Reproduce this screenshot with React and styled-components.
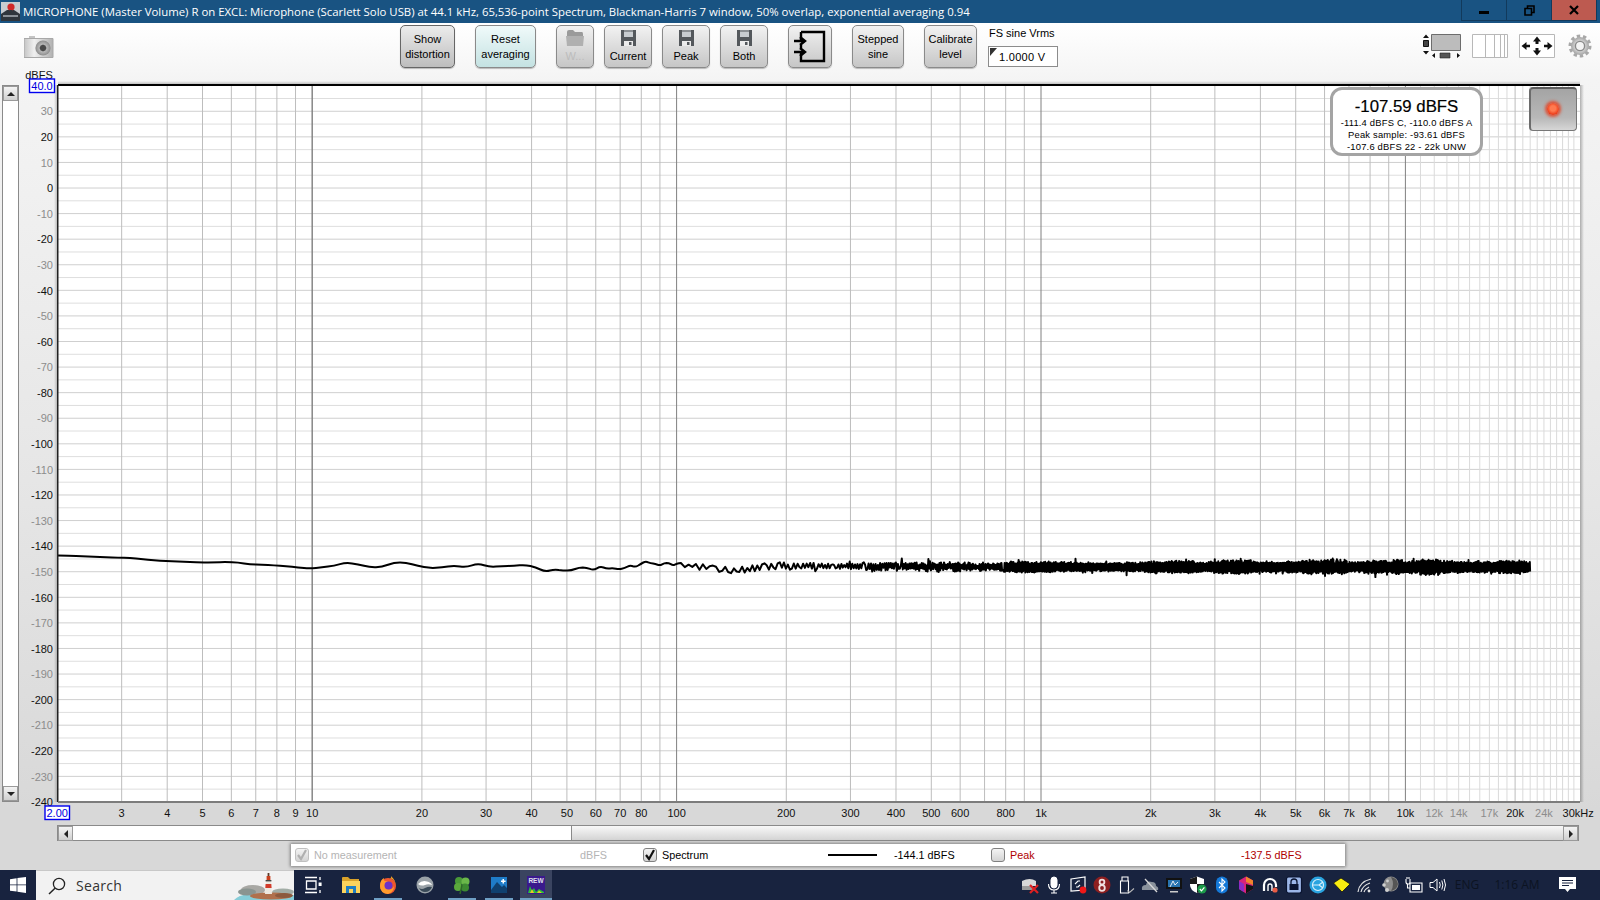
import styled, { createGlobalStyle } from "styled-components";

const GlobalStyle = createGlobalStyle`
  html, body {
    margin: 0;
    padding: 0;
    width: 1600px;
    height: 900px;
    overflow: hidden;
    font-family: "Liberation Sans", Arial, sans-serif;
  }
  #root { height: 100%; }
`;

// chart geometry, page pixels
const PLOT = { left: 58, right: 1580, top: 85, bottom: 802 };
const DECADE = 364.4;
const freqX = (f) => 312.2 + (Math.log10(f) - 1) * DECADE;
const dbY = (db) => 85.7 + (40 - db) * 2.558;

const buildGridFreqs = () => {
  const light = [];
  const mid = [];
  const dark = [];
  [1, 10, 100, 1000].forEach((d) => {
    for (let i = 1; i < 10; i++) {
      const f = d * i;
      if (f < 2) continue;
      if (i === 1 && d > 1) dark.push(f);
      else if (i === 1) continue;
      else mid.push(f);
    }
  });
  dark.push(10, 10000);
  for (let f = 11000; f < 30000; f += 1000) {
    if (f === 20000) mid.push(f);
    else light.push(f);
  }
  return { light, mid, dark };
};

const xLabels = [
  [3, "3"], [4, "4"], [5, "5"], [6, "6"], [7, "7"], [8, "8"], [9, "9"], [10, "10"],
  [20, "20"], [30, "30"], [40, "40"], [50, "50"], [60, "60"], [70, "70"], [80, "80"], [100, "100"],
  [200, "200"], [300, "300"], [400, "400"], [500, "500"], [600, "600"], [800, "800"], [1000, "1k"],
  [2000, "2k"], [3000, "3k"], [4000, "4k"], [5000, "5k"], [6000, "6k"], [7000, "7k"], [8000, "8k"],
  [10000, "10k"], [12000, "12k", true], [14000, "14k", true], [17000, "17k", true], [20000, "20k"],
  [24000, "24k", true], [29800, "30kHz"],
];

const rng = (seed) => () => {
  seed = (seed + 0x6d2b79f5) | 0;
  let t = Math.imul(seed ^ (seed >>> 15), 1 | seed);
  t = (t + Math.imul(t ^ (t >>> 7), 61 | t)) ^ t;
  return ((t ^ (t >>> 14)) >>> 0) / 4294967296;
};

// mean of the trace, read off the picture
const traceKeys = [
  [58, 555.5], [121, 557.5], [166, 561], [202, 562.5], [231, 562], [255, 564.5], [276, 565.5],
  [312, 568.5], [327, 567], [347, 562.5], [376, 568], [400, 561.5], [420, 566], [439, 569.5],
  [454, 564.5], [470, 566.5], [480, 564.5], [495, 567.5], [515, 564.5], [531, 567.5], [546, 570.5],
  [560, 567.5], [580, 568], [620, 567], [650, 565], [690, 566], [730, 570], [780, 566],
  [1000, 567], [1530, 567],
];

const meanAt = (x) => {
  for (let i = 1; i < traceKeys.length; i++) {
    const [x0, y0] = traceKeys[i - 1];
    const [x1, y1] = traceKeys[i];
    if (x <= x1) {
      const t = (x - x0) / (x1 - x0);
      const s = t * t * (3 - 2 * t);
      return y0 + (y1 - y0) * s;
    }
  }
  return 567;
};

const ampAt = (x) => {
  if (x < 430) return 0;
  if (x < 680) return 2 + ((x - 430) / 250) * 2.4;
  if (x < 1000) return 3 + ((x - 680) / 320) * 1.8;
  return 4.8 + ((x - 1000) / 530) * 2.6;
};

const buildTrace = () => {
  const rand = rng(4217);
  const pts = [];
  let x = PLOT.left;
  let side = 1;
  let env = 1;
  while (x < 1530.5) {
    const f = 10 * Math.pow(10, (x - 312) / DECADE);
    let n;
    if (x < 680) {
      n = (rand() - 0.5) * 2 * ampAt(x);
    } else {
      // swing from edge to edge with an uneven rim, so the band reads as noise
      env += (rand() - 0.5) * 0.12;
      env = Math.min(1.15, Math.max(0.72, env));
      if (rand() < 0.85) side = -side;
      n = side * ampAt(x) * env * (x < 1000 ? 0.25 + 0.75 * rand() : 0.55 + 0.45 * rand());
      if (rand() < 0.02) n += 4 * Math.sign(n) * (0.4 + rand() * 0.6);
    }
    pts.push([x, meanAt(x) + n]);
    x += Math.max(0.35, Math.min(12, 400 / f));
  }
  let d = `M${pts[0][0].toFixed(1)} ${pts[0][1].toFixed(1)}`;
  for (let i = 1; i < pts.length - 1; i++) {
    if (pts[i][0] > 680) {
      d += `L${pts[i][0].toFixed(1)} ${pts[i][1].toFixed(1)}`;
    } else {
      const mx = (pts[i][0] + pts[i + 1][0]) / 2;
      const my = (pts[i][1] + pts[i + 1][1]) / 2;
      d += `Q${pts[i][0].toFixed(1)} ${pts[i][1].toFixed(1)} ${mx.toFixed(1)} ${my.toFixed(1)}`;
    }
  }
  return d;
};

const Floppy = () => (
  <svg width="15" height="16" viewBox="0 0 15 16">
    <path d="M0 0H15V16H0Z" fill="#54585c" />
    <path d="M3 0H12V7H3Z" fill="#c8ccd0" />
    <path d="M3 0H12V2H3Z" fill="#8c9094" />
    <path d="M3 11H12V16H3Z" fill="#ececec" />
    <path d="M8 12H10.5V15H8Z" fill="#54585c" />
  </svg>
);

const FolderIcon = () => (
  <svg width="18" height="16" viewBox="0 0 18 16">
    <path d="M1 2Q1 0 3 0H7L9 2H16Q17 2 17 4V6H1Z" fill="#9a9a9a" />
    <path d="M0 6H18L17 16H1Z" fill="#b0b0b0" />
  </svg>
);

const InputIcon = () => (
  <svg width="33" height="33" viewBox="0 0 33 33">
    <path d="M7 2H30V31H7V23" fill="none" stroke="#000" strokeWidth="2.4" />
    <path d="M7 2V10M7 15V18" fill="none" stroke="#000" strokeWidth="2.4" />
    <path d="M0 11H10M6 7L11 11L6 15M0 22H10M6 18L11 22L6 26" fill="none" stroke="#000" strokeWidth="2.4" />
  </svg>
);

const CameraIcon = () => (
  <svg width="30" height="22" viewBox="0 0 30 22">
    <defs>
      <linearGradient id="camBody" x1="0" x2="1" y1="0" y2="0">
        <stop offset="0" stopColor="#c4c4c4" />
        <stop offset="0.35" stopColor="#f0f0f0" />
        <stop offset="1" stopColor="#b0b0b0" />
      </linearGradient>
      <radialGradient id="camLens">
        <stop offset="0.35" stopColor="#4a4a4a" />
        <stop offset="0.5" stopColor="#b8b8b8" />
        <stop offset="1" stopColor="#8c8c8c" />
      </radialGradient>
    </defs>
    <path d="M5 0H11V3H5Z" fill="#c4c4c4" />
    <path d="M0 2.5H29V21.5H0Z" fill="url(#camBody)" stroke="#a8a8a8" />
    <circle cx="19" cy="12" r="7.6" fill="url(#camLens)" />
  </svg>
);

const ResizeIcon = () => (
  <svg width="38" height="25" viewBox="0 0 38 25">
    <path d="M8.5 0.5H37.5V16.5H8.5Z" fill="#bcbcbc" stroke="#6d6d6d" />
    <path d="M0 4L3 0.5L6 4ZM0 17L3 20.5L6 17Z" fill="#111" />
    <path d="M0.5 6.5H5.5V12.5H0.5Z" fill="#444" stroke="#111" />
    <path d="M12 19L9 21.5L12 24ZM34 19L37 21.5L34 24Z" fill="#111" />
    <path d="M17 19H27V24H17Z" fill="#555" stroke="#222" strokeWidth="0.6" />
  </svg>
);

const ColumnsIcon = () => (
  <svg width="36" height="24" viewBox="0 0 36 24">
    <path d="M0.5 0.5H35.5V23.5H0.5ZM13.5 0.5V23.5M22.5 0.5V23.5M28.5 0.5V23.5M32.5 0.5V23.5" fill="#fff" stroke="#b8b8b8" />
  </svg>
);

const ArrowsIcon = () => (
  <svg width="36" height="24" viewBox="0 0 36 24">
    <path d="M0.5 0.5H35.5V23.5H0.5Z" fill="#fff" stroke="#b8b8b8" />
    <path d="M18 2.5L22 7.5H19.5V10H16.5V7.5H14ZM18 21.5L22 16.5H19.5V14H16.5V16.5H14ZM2.5 12L7.5 8V10.8H11V13.2H7.5V16ZM33.5 12L28.5 8V10.8H25V13.2H28.5V16Z" fill="#111" />
  </svg>
);

const GearIcon = () => (
  <svg width="24" height="24" viewBox="0 0 24 24">
    <defs>
      <radialGradient id="gearFill">
        <stop offset="0.4" stopColor="#e4e4e4" />
        <stop offset="1" stopColor="#a4a4a4" />
      </radialGradient>
    </defs>
    <circle cx="12" cy="12" r="10" fill="none" stroke="#a8a8a8" strokeWidth="3" strokeDasharray="3.4 2.83" />
    <circle cx="12" cy="12" r="9" fill="url(#gearFill)" />
    <circle cx="12" cy="12" r="4.6" fill="#f4f4f4" stroke="#8a8a8a" strokeWidth="1.4" />
  </svg>
);

const AppIcon = () => (
  <svg width="19" height="20" viewBox="0 0 19 20">
    <path d="M0 1H19V20H0Z" fill="#c8ccd0" />
    <path d="M0 13L6 9L13 9L19 13V20H0Z" fill="#30363c" />
    <path d="M2 14H17V16H2Z" fill="#8a9096" />
    <circle cx="10" cy="6" r="3.6" fill="#d02828" />
    <path d="M9 9H11V14H9Z" fill="#30363c" />
  </svg>
);

const WindowsLogo = () => (
  <svg width="16" height="16" viewBox="0 0 16 16">
    <path d="M0 2.2L6.6 1.2V7.4H0ZM7.4 1.1L16 0V7.4H7.4ZM0 8.2H6.6V14.6L0 13.7ZM7.4 8.2H16V16L7.4 14.8Z" fill="#fff" />
  </svg>
);

const SearchGlyph = () => (
  <svg width="18" height="18" viewBox="0 0 18 18">
    <circle cx="11" cy="7" r="5.6" fill="none" stroke="#222" strokeWidth="1.3" />
    <path d="M7 11.2L1 17" stroke="#222" strokeWidth="1.5" />
  </svg>
);

const Lighthouse = () => (
  <svg width="60" height="27" viewBox="0 0 60 27">
    <path d="M0 27Q6 21 16 22H60V27Z" fill="#86cdd8" />
    <ellipse cx="19" cy="17" rx="12" ry="5" fill="#a8a8a4" />
    <ellipse cx="13" cy="19" rx="9" ry="3.4" fill="#8a9490" />
    <ellipse cx="49" cy="19" rx="11" ry="3.4" fill="#a2ada6" />
    <ellipse cx="37" cy="23" rx="21" ry="3.6" fill="#b0704c" />
    <ellipse cx="50" cy="22.5" rx="9" ry="2.6" fill="#8c5a3e" />
    <path d="M32 8H37L38 21H31Z" fill="#ece8e0" />
    <path d="M31.6 11H37.3L37.6 15H31.3Z" fill="#d23a2a" />
    <path d="M32.6 3H36.4V7.4H32.6Z" fill="#c8401e" />
    <path d="M33.6 0H35.4V3H33.6Z" fill="#5a3a2a" />
    <path d="M31.6 7H37.4V8.4H31.6Z" fill="#444" />
  </svg>
);

const TaskViewIcon = () => (
  <svg width="18" height="18" viewBox="0 0 18 18" fill="none" stroke="#fff" strokeWidth="1.3">
    <path d="M0 1.5H12M0 16.5H12M1.5 5H11V13H1.5Z" />
    <path d="M15 1V4M15 14V17" />
    <path d="M13.6 6.5H16.6V10H13.6Z" fill="#fff" stroke="none" />
  </svg>
);

const ExplorerIcon = () => (
  <svg width="18" height="16" viewBox="0 0 18 16">
    <path d="M0 1Q0 0 1 0H6L8 2H17V6H0Z" fill="#d9a22a" />
    <path d="M0 4H18V16H0Z" fill="#fcd35c" />
    <path d="M4 9H14V16H11V12H7V16H4Z" fill="#1f7ec2" />
  </svg>
);

const FirefoxIcon = () => (
  <svg width="18" height="18" viewBox="0 0 18 18">
    <circle cx="9" cy="10" r="8" fill="#f0562f" />
    <path d="M9 2Q16 2 17 10Q17 5 12 0Q13 3 9 2Z" fill="#ffa824" />
    <path d="M1 10Q1 4 5 2Q4 6 9 5Q4 9 9 13Q13 14 15 10Q15 16 9 18Q1 17 1 10Z" fill="#ff9c2c" />
    <circle cx="9.5" cy="9.5" r="4" fill="#6b33c8" />
  </svg>
);

const DiscIcon = () => (
  <svg width="18" height="18" viewBox="0 0 18 18">
    <circle cx="9" cy="9" r="8.5" fill="#9aa2a8" />
    <path d="M2 8Q6 4 11 5.5Q15 6.5 16 9Q12 7.6 9 9Q5 10.5 2 8Z" fill="#fff" />
    <path d="M3 12Q6 14 9 12Q13 10 16 11Q14 16 9 16Q5 16 3 12Z" fill="#3a4a58" />
  </svg>
);

const CloverIcon = () => (
  <svg width="18" height="18" viewBox="0 0 18 18">
    <circle cx="6" cy="5" r="4" fill="#4a9a38" />
    <circle cx="12.5" cy="5.5" r="4" fill="#6ab84a" />
    <circle cx="5" cy="11" r="4" fill="#5aa83c" />
    <circle cx="12" cy="11.5" r="4" fill="#3d8a32" />
    <path d="M9 9L7 18" stroke="#2e6a28" strokeWidth="1.4" />
  </svg>
);

const PhotoIcon = () => (
  <svg width="16" height="16" viewBox="0 0 16 16">
    <path d="M0 0H16V16H0Z" fill="#1f7cc8" />
    <path d="M0 13L6 5L11 10L13 8L16 11V16H0Z" fill="#10406e" />
    <path d="M11.5 2H13V3.6H14.6V5H13V6.6H11.5V5H10V3.6H11.5Z" fill="#fff" />
  </svg>
);

const RewIcon = () => (
  <svg width="18" height="18" viewBox="0 0 18 18">
    <path d="M0 0H18V18H0Z" fill="#3a1a8c" />
    <RewLetters x="9" y="6.6" textAnchor="middle">REW</RewLetters>
    <path d="M1 17L3 10L5 15L7 12L9 16L12 13L17 16V17Z" fill="#28c03a" />
    <path d="M3 17L5 13L7 17ZM10 17L12 14.5L15 17Z" fill="#e8c828" />
  </svg>
);

const TRAY = [
  <g key="net">
    <path d="M1 5Q9 1 15 5V10H1Z" fill="#d8d8d8" />
    <path d="M1 10H12V14H1Z" fill="#9c9c9c" />
    <path d="M9 9L17 17M17 9L9 17" stroke="#e02020" strokeWidth="2.2" />
  </g>,
  <g key="mic" fill="none" stroke="#fff">
    <rect x="6" y="1" width="6" height="11" rx="3" fill="#fff" />
    <path d="M3.5 8Q3.5 14 9 14Q14.5 14 14.5 8M9 14V17M6 17H12" strokeWidth="1.1" />
  </g>,
  <g key="rec">
    <path d="M2 3L16 1V14L2 15Z" fill="none" stroke="#fff" strokeWidth="1.2" />
    <path d="M6 8L9 5H11M11 9L9 11H7" fill="none" stroke="#fff" strokeWidth="1.1" />
    <circle cx="14" cy="14" r="3.4" fill="#f01818" />
  </g>,
  <g key="eight">
    <circle cx="9" cy="9" r="8.5" fill="#8c1f20" />
    <circle cx="9" cy="6" r="2.4" fill="none" stroke="#f0e0e0" strokeWidth="1.8" />
    <circle cx="9" cy="12" r="2.8" fill="none" stroke="#f0e0e0" strokeWidth="1.8" />
  </g>,
  <g key="usb" fill="none" stroke="#fff" strokeWidth="1.1">
    <path d="M5 1H11V5H5ZM3.5 5H11.5V17H3.5Z" />
    <path d="M10.5 14.5L12.5 16.5L17 12.5" stroke="#b8b8b8" />
  </g>,
  <g key="cloud">
    <path d="M1 14Q0 9 5 9Q6 4 11 6Q15 6 15 10Q18 11 17 14Z" fill="#8a929c" />
    <path d="M4 3L16 16" stroke="#d8d8d8" strokeWidth="1.3" />
  </g>,
  <g key="monitor">
    <path d="M1 2H17V13H1Z" fill="#111" />
    <path d="M3 4H15V11H3Z" fill="#2874b0" />
    <path d="M5 11L8 5L10 9L13 6" fill="none" stroke="#e0e8f0" />
    <path d="M5 15H13V16.5H5Z" fill="#cccccc" />
  </g>,
  <g key="shield">
    <path d="M8 0.5L15 3V9Q15 14 8 17Q1 14 1 9V3Z" fill="#fff" />
    <path d="M8 0.5V8H1V3ZM8 8H15V9Q15 14 8 17Z" fill="#1a1a1a" />
    <circle cx="13" cy="13" r="4.6" fill="#1b9a4a" />
    <path d="M10.8 13L12.5 14.8L15.4 11.4" fill="none" stroke="#fff" strokeWidth="1.2" />
  </g>,
  <g key="bt">
    <rect x="3" y="0.5" width="12" height="17" rx="6" fill="#1478d8" />
    <path d="M6 6L12 12L9 15V3L12 6L6 12" fill="none" stroke="#fff" strokeWidth="1.1" />
  </g>,
  <g key="hex">
    <path d="M9 0.5L16 4.5V13L9 17.5L2 13V4.5Z" fill="#d8247a" />
    <path d="M9 0.5L16 4.5V9L9 6Z" fill="#f0842c" />
    <path d="M9 8L16 10V13L9 17.5Z" fill="#141414" />
    <path d="M2 5L7 8V16L2 13Z" fill="#8c2cc8" />
  </g>,
  <g key="arc">
    <path d="M3 15V9A6 6 0 0 1 15 9V11" fill="none" stroke="#fff" strokeWidth="2.2" />
    <path d="M7 15V10A2 2 0 0 1 11 10V15" fill="none" stroke="#fff" strokeWidth="1.4" />
    <circle cx="14" cy="14" r="2.6" fill="#e85c44" />
  </g>,
  <g key="lock">
    <rect x="1.5" y="1" width="15" height="16" rx="2" fill="#9cb6e8" stroke="#0a1430" strokeWidth="1.2" />
    <path d="M6 8V6A3 3 0 0 1 12 6V8" fill="none" stroke="#0a1430" strokeWidth="1.3" />
    <rect x="4.5" y="8" width="9" height="6" fill="#0a1430" />
  </g>,
  <g key="globe">
    <circle cx="9" cy="9" r="8.5" fill="#2aa4e0" />
    <circle cx="9" cy="9" r="5.5" fill="none" stroke="#d8f0fc" strokeWidth="1.2" />
    <path d="M3 9H10L14 6M10 9L14 12" fill="none" stroke="#d8f0fc" strokeWidth="1.2" />
  </g>,
  <g key="diamond">
    <path d="M0.5 7L8 2L17 8L9 16Z" fill="#f8ec10" stroke="#111" strokeWidth="0.8" />
  </g>,
  <g key="wifi" fill="none" stroke="#e4e4e4" strokeWidth="1.2">
    <path d="M1 16Q2 6 14 3M4 16Q5 10 13 7M7 16Q8 13 12 11" />
    <circle cx="12" cy="15" r="1.4" fill="#e4e4e4" stroke="none" />
  </g>,
  <g key="ball">
    <circle cx="10" cy="8" r="7.5" fill="#8c8c8c" />
    <path d="M10 1A7.5 7.5 0 0 1 17 8A9 9 0 0 1 10 15Q14 8 10 1Z" fill="#555" />
    <circle cx="3" cy="9" r="1.8" fill="#d0d0d0" />
    <circle cx="6" cy="14" r="2" fill="#d0d0d0" />
    <circle cx="6.5" cy="5" r="1.4" fill="#d0d0d0" />
  </g>,
  <g key="power" fill="none" stroke="#fff" strokeWidth="1.1">
    <path d="M5 7H17V16H5Z" />
    <path d="M7 9H15V14H7Z" fill="#fff" stroke="none" />
    <path d="M1 3V6Q1 8 3 8H4Q5 8 5 6V3M2 1V3M4 1V3M2.5 8V12H5" />
  </g>,
  <g key="speaker" fill="none" stroke="#fff" strokeWidth="1">
    <path d="M1 6.5H4L8 3V15L4 11.5H1Z" />
    <path d="M10.5 6Q12 9 10.5 12M12.8 4.5Q15 9 12.8 13.5M15 3Q18 9 15 15" />
  </g>,
];

const TaskApps = [
  { id: "task", icon: <TaskViewIcon /> },
  { id: "explorer", icon: <ExplorerIcon /> },
  { id: "firefox", icon: <FirefoxIcon />, open: true },
  { id: "disc", icon: <DiscIcon /> },
  { id: "clover", icon: <CloverIcon />, open: true },
  { id: "photo", icon: <PhotoIcon />, open: true },
  { id: "rew", icon: <RewIcon />, open: true, active: true },
];

const TRACE = buildTrace();
const GRID = buildGridFreqs();

const Chart = () => {
  const ticks = [];
  for (let db = 30; db >= -240; db -= 10) ticks.push(db);
  const minor = [];
  for (let db = 35; db > -240; db -= 10) minor.push(db);

  return (
    <ChartSvg viewBox="22 70 1578 755">
      <defs>
        <linearGradient id="shadeV" x1="0" x2="0" y1="0" y2="1">
          <stop offset="0" stopColor="#000" stopOpacity="0" />
          <stop offset="1" stopColor="#000" stopOpacity="0.28" />
        </linearGradient>
        <linearGradient id="shadeL" x1="0" x2="1" y1="0" y2="0">
          <stop offset="0" stopColor="#000" stopOpacity="0" />
          <stop offset="1" stopColor="#000" stopOpacity="0.28" />
        </linearGradient>
        <linearGradient id="shadeR" x1="1" x2="0" y1="0" y2="0">
          <stop offset="0" stopColor="#000" stopOpacity="0" />
          <stop offset="1" stopColor="#000" stopOpacity="0.28" />
        </linearGradient>
      </defs>

      <rect x={PLOT.left - 4} y={PLOT.top} width="4" height={PLOT.bottom - PLOT.top} fill="url(#shadeL)" />
      <rect x={PLOT.right} y={PLOT.top} width="4" height={PLOT.bottom - PLOT.top} fill="url(#shadeR)" />
      <rect x={PLOT.left} y={PLOT.top - 4} width={PLOT.right - PLOT.left} height="4" fill="url(#shadeV)" />
      <rect x={PLOT.left} y={PLOT.top} width={PLOT.right - PLOT.left} height={PLOT.bottom - PLOT.top} fill="#fff" />

      {minor.map((db) => (
        <HLine key={db} x1={PLOT.left} x2={PLOT.right} y1={dbY(db)} y2={dbY(db)} $shade="#dedede" />
      ))}
      {ticks.map((db) => (
        <HLine key={db} x1={PLOT.left} x2={PLOT.right} y1={dbY(db)} y2={dbY(db)} $shade="#cfcfcf" />
      ))}
      {GRID.light.map((f) => (
        <VLine key={f} x1={freqX(f)} x2={freqX(f)} y1={PLOT.top} y2={PLOT.bottom} $shade="#dadada" />
      ))}
      {GRID.mid.map((f) => (
        <VLine key={f} x1={freqX(f)} x2={freqX(f)} y1={PLOT.top} y2={PLOT.bottom} $shade="#bdbdbd" />
      ))}
      {GRID.dark.map((f) => (
        <VLine key={f} x1={freqX(f)} x2={freqX(f)} y1={PLOT.top} y2={PLOT.bottom} $shade="#808080" />
      ))}

      <TraceLine d={TRACE} />

      <rect x={PLOT.left} y={PLOT.top - 1} width={PLOT.right - PLOT.left} height="2" fill="#000" />
      <rect x={PLOT.left - 1} y={PLOT.top} width="1.5" height={PLOT.bottom - PLOT.top} fill="#222" />
      <rect x={PLOT.left} y={PLOT.bottom - 1} width={PLOT.right - PLOT.left} height="2" fill="#7c7c7c" />

      <AxisLabel x="39" y="79" textAnchor="middle">dBFS</AxisLabel>
      {ticks.map((db) => (
        <AxisLabel key={db} x="53" y={dbY(db) + 4.2} textAnchor="end" $muted={db % 20 !== 0}>
          {db}
        </AxisLabel>
      ))}

      <BlueBox x="29.5" y="79" width="25" height="13.5" />
      <BlueText x="42" y="90" textAnchor="middle">40.0</BlueText>

      {xLabels.map(([f, text, muted]) => (
        <AxisLabel key={text} x={freqX(f)} y="817" textAnchor="middle" $muted={muted}>
          {text}
        </AxisLabel>
      ))}
      <BlueBox x="45" y="806" width="24.5" height="13.5" />
      <BlueText x="57.2" y="817" textAnchor="middle">2.00</BlueText>
    </ChartSvg>
  );
};

export default function App() {
  return (
    <Page>
      <GlobalStyle />
      <TitleBar>
        <TitleIcon><AppIcon /></TitleIcon>
        <TitleText>
          MICROPHONE (Master Volume) R on EXCL: Microphone (Scarlett Solo USB) at 44.1 kHz, 65,536-point Spectrum,
          Blackman-Harris 7 window, 50% overlap, exponential averaging 0.94
        </TitleText>
        <WindowButton>
          <MinimizeMark />
        </WindowButton>
        <WindowButton>
          <svg width="11" height="11" viewBox="0 0 11 11" fill="none" stroke="#000" strokeWidth="1.6">
            <path d="M1 3.5H7.5V10H1ZM3.5 3V1H10V7.5H8" />
          </svg>
        </WindowButton>
        <WindowButton $close>
          <svg width="10" height="10" viewBox="0 0 10 10" stroke="#000" strokeWidth="2.2">
            <path d="M1 1L9 9M9 1L1 9" />
          </svg>
        </WindowButton>
      </TitleBar>

      <Toolbar>
        <CameraSlot><CameraIcon /></CameraSlot>
        <ToolButton $w={55} $dark>Show<br />distortion</ToolButton>
        <ToolButton $w={61} $tint>Reset<br />averaging</ToolButton>
        <SaveGroup>
          <ToolButton $w={38} $icon $disabled><FolderIcon />W...</ToolButton>
          <ToolButton $w={48} $icon><Floppy />Current</ToolButton>
          <ToolButton $w={48} $icon><Floppy />Peak</ToolButton>
          <ToolButton $w={48} $icon><Floppy />Both</ToolButton>
        </SaveGroup>
        <ToolButton $w={44}><InputIcon /></ToolButton>
        <ToolButton $w={52}>Stepped<br />sine</ToolButton>
        <ToolButton $w={53}>Calibrate<br />level</ToolButton>
        <FsBlock>
          <FsLabel>FS sine Vrms</FsLabel>
          <FsField>1.0000 V</FsField>
        </FsBlock>
        <ViewIcons>
          <ResizeIcon />
          <ColumnsIcon />
          <ArrowsIcon />
          <GearSlot><GearIcon /></GearSlot>
        </ViewIcons>
      </Toolbar>

      <ChartRow>
        <VScroll>
          <ScrollArrow $dir="up" />
          <ScrollArrow $dir="down" />
        </VScroll>
        <Chart />
        <InfoBox>
          <InfoMain>-107.59 dBFS</InfoMain>
          <InfoLine>-111.4 dBFS C, -110.0 dBFS A</InfoLine>
          <InfoLine>Peak sample: -93.61 dBFS</InfoLine>
          <InfoLine>-107.6 dBFS 22 - 22k UNW</InfoLine>
        </InfoBox>
        <RecordButton><RecordLed /></RecordButton>
      </ChartRow>

      <HScroll>
        <ScrollArrow $dir="left" />
        <HTrack />
        <HThumb />
        <ScrollArrow $dir="right" />
      </HScroll>

      <Legend>
        <LegendItem>
          <CheckBox $disabled>
            <CheckMark viewBox="0 0 12 12"><path d="M2 6L5 10L10 1" stroke="#b0b0b0" /></CheckMark>
          </CheckBox>
          <LegendText $color="#b4b4b4">No measurement</LegendText>
        </LegendItem>
        <LegendText $color="#b4b4b4">dBFS</LegendText>
        <LegendItem>
          <CheckBox>
            <CheckMark viewBox="0 0 12 12"><path d="M2 6L5 10L10 1" stroke="#111" /></CheckMark>
          </CheckBox>
          <LegendText>Spectrum</LegendText>
        </LegendItem>
        <LegendLine />
        <LegendText>-144.1 dBFS</LegendText>
        <LegendItem>
          <CheckBox />
          <LegendText $color="#b00000">Peak</LegendText>
        </LegendItem>
        <LegendText $color="#b00000">-137.5 dBFS</LegendText>
      </Legend>

      <Taskbar>
        <StartButton><WindowsLogo /></StartButton>
        <SearchBox>
          <SearchGlyph />
          <SearchLabel>Search</SearchLabel>
          <SearchArt><Lighthouse /></SearchArt>
        </SearchBox>
        <TaskStrip>
          {TaskApps.map((a) => (
            <TaskApp key={a.id} $open={a.open} $active={a.active}>
              {a.icon}
            </TaskApp>
          ))}
        </TaskStrip>
        <Tray>
          {TRAY.map((icon) => (
            <TraySlot key={icon.key}>
              <svg width="18" height="18" viewBox="0 0 18 18">{icon}</svg>
            </TraySlot>
          ))}
        </Tray>
        <TrayText $w={34}>ENG</TrayText>
        <TrayText $w={66}>1:16 AM</TrayText>
        <NotifySlot>
          <svg width="17" height="16" viewBox="0 0 17 16">
            <path d="M0 0H17V12H11L8.5 15L6 12H0Z" fill="#fff" />
            <path d="M3 3.5H14M3 6H14M3 8.5H10" stroke="#18233f" strokeWidth="1" />
          </svg>
        </NotifySlot>
      </Taskbar>
    </Page>
  );
}

const Page = styled.div`
  position: relative;
  width: 1600px;
  height: 900px;
  display: flex;
  flex-direction: column;
  overflow: hidden;
  background: linear-gradient(#ffffff 24px, #f4f4f4 80px, #e6e6e6 480px, #d8d8d8 810px);
`;

const TitleBar = styled.div`
  flex: none;
  height: 23px;
  display: flex;
  align-items: flex-start;
  background: #195382;
  color: #fff;
  padding-right: 3px;
`;

const TitleIcon = styled.div`
  width: 23px;
  display: flex;
  padding: 1px 0 0 1px;
  box-sizing: border-box;
`;

const TitleText = styled.div`
  flex: 1;
  font-family: "Open Sans", "Noto Sans", sans-serif;
  font-size: 11.38px;
  line-height: 23px;
  white-space: nowrap;
`;

const WindowButton = styled.div`
  width: 46px;
  height: 21px;
  display: flex;
  align-items: center;
  justify-content: center;
  box-sizing: border-box;
  border: 1px solid #123a5c;
  border-top: none;
  margin-left: -1px;
  background: ${({ $close }) => ($close ? "#bd5a50" : "transparent")};
`;

const MinimizeMark = styled.div`
  width: 10px;
  height: 3px;
  margin-top: 4px;
  background: #000;
`;

const Toolbar = styled.div`
  flex: none;
  height: 47px;
  box-sizing: border-box;
  padding: 2px 8px 0 24px;
  display: flex;
  align-items: flex-start;
  gap: 20px;
`;

const CameraSlot = styled.div`
  width: 30px;
  margin: 11px 326px 0 0;
  display: flex;
`;

const ToolButton = styled.div`
  flex: none;
  width: ${({ $w }) => $w}px;
  height: 43px;
  box-sizing: border-box;
  display: flex;
  flex-direction: column;
  align-items: center;
  justify-content: ${({ $icon }) => ($icon ? "space-between" : "center")};
  padding: ${({ $icon }) => ($icon ? "4px 0 3px" : "0")};
  text-align: center;
  font-size: 11px;
  line-height: 15px;
  color: ${({ $disabled }) => ($disabled ? "#bcbcbc" : "#000")};
  border: 1px solid ${({ $dark }) => ($dark ? "#666" : "#8a8a8a")};
  border-radius: 5px;
  background: ${({ $dark, $tint }) =>
    $dark
      ? "linear-gradient(#ececec, #bdbdbd)"
      : $tint
      ? "linear-gradient(#f0fafa, #c4e2e2)"
      : "linear-gradient(#f2f2f2, #c6c6c6)"};
  box-shadow: 0 1px 1px rgba(0, 0, 0, 0.25);
`;

const SaveGroup = styled.div`
  display: flex;
  gap: 10px;
`;

const FsBlock = styled.div`
  width: 70px;
  margin-left: -9px;
  display: flex;
  flex-direction: column;
  gap: 6px;
`;

const FsLabel = styled.div`
  font-size: 11px;
  line-height: 14px;
  padding: 1px 0 0 1px;
  white-space: nowrap;
`;

const FsField = styled.div`
  position: relative;
  height: 21px;
  box-sizing: border-box;
  background: #fff;
  border: 1px solid #8c8c8c;
  font-size: 11px;
  line-height: 21px;
  padding-left: 10px;
  letter-spacing: 0.3px;

  &::before {
    content: "";
    position: absolute;
    left: 1px;
    top: 1px;
    border-top: 8px solid #333;
    border-right: 7px solid transparent;
  }
`;

const ViewIcons = styled.div`
  margin-left: auto;
  margin-top: 9px;
  display: flex;
  align-items: flex-start;
  gap: 11px;
`;

const GearSlot = styled.div`
  display: flex;
  margin-left: 2px;
`;

const ChartRow = styled.div`
  position: relative;
  flex: none;
  height: 755px;
  display: flex;
`;

const VScroll = styled.div`
  flex: none;
  width: 17px;
  height: 717px;
  box-sizing: border-box;
  margin: 15px 3px 0 2px;
  display: flex;
  flex-direction: column;
  justify-content: space-between;
  background: #fff;
  border: 1px solid #8a8a8a;
`;

const ScrollArrow = styled.div`
  flex: none;
  position: relative;
  width: ${({ $dir }) => ($dir === "up" || $dir === "down" ? "100%" : "15px")};
  height: 15px;
  box-sizing: border-box;
  background: linear-gradient(#f4f4f4, #cfcfcf);
  border: 1px solid #9a9a9a;

  &::after {
    content: "";
    position: absolute;
    left: 50%;
    top: 50%;
    transform: translate(-50%, -50%);
    ${({ $dir }) =>
      $dir === "up"
        ? "border-left:4px solid transparent;border-right:4px solid transparent;border-bottom:4px solid #222;"
        : $dir === "down"
        ? "border-left:4px solid transparent;border-right:4px solid transparent;border-top:4px solid #222;"
        : $dir === "left"
        ? "border-top:4px solid transparent;border-bottom:4px solid transparent;border-right:4px solid #222;"
        : "border-top:4px solid transparent;border-bottom:4px solid transparent;border-left:4px solid #222;"}
  }
`;

const ChartSvg = styled.svg`
  flex: none;
  width: 1578px;
  height: 755px;
  display: block;
`;

const HLine = styled.line`
  stroke: ${({ $shade }) => $shade};
  stroke-width: 1;
`;

const VLine = styled.line`
  stroke: ${({ $shade }) => $shade};
  stroke-width: 1;
`;

const TraceLine = styled.path`
  fill: none;
  stroke: #000;
  stroke-width: 2;
  stroke-linejoin: round;
`;

const AxisLabel = styled.text`
  font-family: "Liberation Sans", Arial, sans-serif;
  font-size: 11px;
  fill: ${({ $muted }) => ($muted ? "#8c8c8c" : "#111")};
`;

const BlueBox = styled.rect`
  fill: #fff;
  stroke: #0000f0;
  stroke-width: 1.4;
`;

const BlueText = styled.text`
  font-family: "Liberation Sans", Arial, sans-serif;
  font-size: 11px;
  fill: #0000e0;
`;

const RewLetters = styled.text`
  font-family: "Liberation Sans", Arial, sans-serif;
  font-size: 6.5px;
  font-weight: 700;
  fill: #e0e0f0;
`;

const InfoBox = styled.div`
  position: absolute;
  left: 1330px;
  top: 17px;
  width: 153px;
  height: 69px;
  box-sizing: border-box;
  padding-top: 7px;
  text-align: center;
  background: #fff;
  border: 3px solid #a4a4a4;
  border-radius: 12px;
`;

const InfoMain = styled.div`
  font-size: 16.8px;
  line-height: 20px;
  -webkit-text-stroke: 0.2px #000;
`;

const InfoLine = styled.div`
  font-size: 9.4px;
  line-height: 12px;
  letter-spacing: 0.2px;
  white-space: nowrap;
`;

const RecordButton = styled.div`
  position: absolute;
  left: 1529px;
  top: 17px;
  width: 48px;
  height: 44px;
  box-sizing: border-box;
  display: flex;
  align-items: center;
  justify-content: center;
  padding: 0 2px 2px 0;
  border-radius: 4px;
  border: 1px solid #777;
  border-top: 2px solid #5c5c5c;
  border-left: 2px solid #6c6c6c;
  background: linear-gradient(#a4a4a4, #b8b8b8 70%, #d6d6d6);
`;

const RecordLed = styled.div`
  width: 12px;
  height: 12px;
  border-radius: 50%;
  background: radial-gradient(circle at 50% 45%, #ff7a50 30%, #e8300f 75%);
  box-shadow: 0 0 3px 2px rgba(235, 50, 15, 0.75);
`;

const HScroll = styled.div`
  flex: none;
  width: 1522px;
  height: 16px;
  box-sizing: border-box;
  margin-left: 57px;
  display: flex;
  border: 1px solid #8a8a8a;
`;

const HTrack = styled.div`
  width: 498px;
  background: #fff;
`;

const HThumb = styled.div`
  flex: 1;
  background: linear-gradient(#f8f8f8, #d4d4d4);
  border-left: 1px solid #8a8a8a;
`;

const Legend = styled.div`
  flex: none;
  width: 1054px;
  height: 22px;
  box-sizing: border-box;
  margin: 3px 0 0 291px;
  padding-left: 4px;
  display: grid;
  grid-template-columns: 285px 63px 185px 66px 97px 250px auto;
  align-items: center;
  background: #fff;
  box-shadow: 0 0 3px 1px rgba(0, 0, 0, 0.4);
`;

const LegendItem = styled.div`
  display: flex;
  align-items: center;
  gap: 5px;
`;

const LegendText = styled.span`
  font-size: 10.8px;
  white-space: nowrap;
  color: ${({ $color }) => $color || "#000"};
`;

const LegendLine = styled.div`
  width: 49px;
  height: 2px;
  background: #000;
`;

const CheckBox = styled.div`
  width: 14px;
  height: 14px;
  box-sizing: border-box;
  display: flex;
  border-radius: 3px;
  border: 1px solid ${({ $disabled }) => ($disabled ? "#c0c0c0" : "#808080")};
  background: linear-gradient(#f4f4f4, #d4d4d4);
`;

const CheckMark = styled.svg`
  width: 12px;
  height: 12px;
  fill: none;
  stroke-width: 2.2;
`;

const Taskbar = styled.div`
  flex: none;
  height: 30px;
  margin-top: auto;
  display: flex;
  align-items: stretch;
  background: #18233f;
`;

const StartButton = styled.div`
  width: 36px;
  display: flex;
  align-items: center;
  justify-content: center;
`;

const SearchBox = styled.div`
  width: 258px;
  box-sizing: border-box;
  display: flex;
  align-items: center;
  gap: 10px;
  padding-left: 12px;
  background: #f2f2f2;
  border-top: 1px solid #c8c8c8;
`;

const SearchLabel = styled.span`
  font-family: "Open Sans", "Noto Sans", sans-serif;
  font-size: 14px;
  letter-spacing: 0.3px;
  color: #333;
`;

const SearchArt = styled.div`
  margin-left: auto;
  display: flex;
  align-self: flex-end;
`;

const TaskStrip = styled.div`
  display: flex;
  padding-left: 1px;
`;

const TaskApp = styled.div`
  width: 37px;
  flex: none;
  box-sizing: border-box;
  display: flex;
  align-items: center;
  justify-content: center;
  background:
    ${({ $open, $active }) =>
      $open
        ? `linear-gradient(#6f9fc4, #6f9fc4) center bottom / ${$active ? 32 : 28}px 2px no-repeat`
        : "none"}
    ${({ $active }) => ($active ? ", linear-gradient(#3a4460, #3a4460) center / 32px 100% no-repeat" : "")};
`;

const Tray = styled.div`
  margin-left: auto;
  display: flex;
  align-items: center;
`;

const TraySlot = styled.div`
  width: 24px;
  display: flex;
  justify-content: center;
`;

const TrayText = styled.div`
  width: ${({ $w }) => $w}px;
  text-align: center;
  font-family: "Open Sans", "Noto Sans", sans-serif;
  font-size: 12px;
  line-height: 30px;
  color: #0c1322;
  white-space: nowrap;
`;

const NotifySlot = styled.div`
  width: 50px;
  box-sizing: border-box;
  padding-right: 16px;
  display: flex;
  align-items: center;
  justify-content: center;
`;
